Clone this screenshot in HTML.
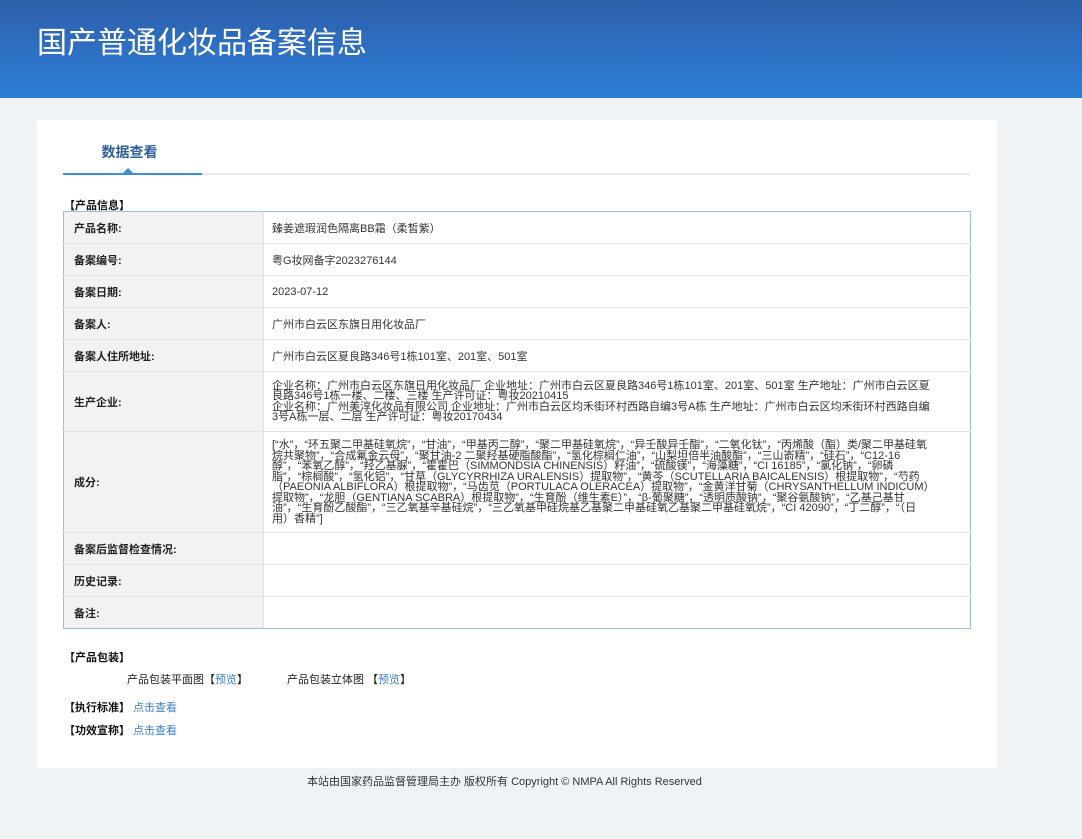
<!DOCTYPE html>
<html><head><meta charset="utf-8"><style>
*{margin:0;padding:0;box-sizing:border-box}
body{width:1082px;height:839px;background:#f0f3f6;font-family:"Liberation Sans","Noto Sans CJK SC",sans-serif;color:#333;position:relative;overflow:hidden}
.hd{position:absolute;left:0;top:0;width:1082px;height:98px;background:linear-gradient(180deg,#2c5faa 0%,#2e6fc2 50%,#2a7fd4 100%)}
.hd h1{position:absolute;left:37px;top:18px;font-size:30px;font-weight:normal;color:#fff;letter-spacing:0}
.card{position:absolute;left:37px;top:120px;width:960px;height:648px;background:#fff}
.tab{position:absolute;left:60px;top:142px;width:139px;text-align:center;font-size:14px;color:#2d5f9c;font-weight:bold}
.line{position:absolute;left:63px;top:173px;width:907px;height:2px;background:#e8e8e8}
.line2{position:absolute;left:63px;top:173px;width:139px;height:2px;background:#3b8fd8}
.tri{position:absolute;left:123px;top:168px;width:0;height:0;border-left:5px solid transparent;border-right:5px solid transparent;border-bottom:5px solid #3b8fd8}
.sec{position:absolute;font-size:11px;font-weight:bold;color:#111}
table{position:absolute;left:63px;top:211px;width:908px;border-collapse:collapse;border:1px solid #9dbde8;font-size:11px}
td{border:1px solid #e2e2e2;vertical-align:middle}
table tr:first-child td{border-top:1px solid #9dbde8}
table tr:last-child td{border-bottom:1px solid #9dbde8}
td.l{width:200px;background:#f2f2f2;font-weight:bold;padding-left:10px;color:#222;border-left:1px solid #9dbde8}
td.v{padding:0 40px 0 8px;color:#333;border-right:1px solid #9dbde8}
.s{line-height:10.5px;padding:6px 40px 6px 8px!important}
.f{position:absolute;font-size:11px;color:#222}
a{color:#3b7fd0;text-decoration:none}
.ft{position:absolute;left:307px;top:773px;font-size:11px;color:#333;white-space:nowrap}
</style></head><body>
<div class="hd"><h1>国产普通化妆品备案信息</h1></div>
<div class="card"></div>
<div class="tab">数据查看</div>
<div class="line"></div><div class="line2"></div><div class="tri"></div>
<div class="sec" style="left:64px;top:197px">【产品信息】</div>
<table>
<tr style="height:32px"><td class="l">产品名称:</td><td class="v">臻姜遮瑕润色隔离BB霜（柔皙紫）</td></tr>
<tr style="height:32px"><td class="l">备案编号:</td><td class="v">粤G妆网备字2023276144</td></tr>
<tr style="height:32px"><td class="l">备案日期:</td><td class="v">2023-07-12</td></tr>
<tr style="height:32px"><td class="l">备案人:</td><td class="v">广州市白云区东旗日用化妆品厂</td></tr>
<tr style="height:32px"><td class="l">备案人住所地址:</td><td class="v">广州市白云区夏良路346号1栋101室、201室、501室</td></tr>
<tr style="height:60px"><td class="l">生产企业:</td><td class="v s">企业名称：广州市白云区东旗日用化妆品厂 企业地址：广州市白云区夏良路346号1栋101室、201室、501室 生产地址：广州市白云区夏良路346号1栋一楼、二楼、三楼 生产许可证：粤妆20210415<br>企业名称：广州美淳化妆品有限公司 企业地址：广州市白云区均禾街环村西路自编3号A栋 生产地址：广州市白云区均禾街环村西路自编3号A栋一层、二层 生产许可证：粤妆20170434</td></tr>
<tr style="height:101px"><td class="l">成分:</td><td class="v s">[“水”，“环五聚二甲基硅氧烷”，“甘油”，“甲基丙二醇”，“聚二甲基硅氧烷”，“异壬酸异壬酯”，“二氧化钛”，“丙烯酸（酯）类/聚二甲基硅氧烷共聚物”，“合成氟金云母”，“聚甘油-2 二聚羟基硬脂酸酯”，“氢化棕榈仁油”，“山梨坦倍半油酸酯”，“三山嵛精”，“硅石”，“C12-16醇”，“苯氧乙醇”，“羟乙基脲”，“霍霍巴（SIMMONDSIA CHINENSIS）籽油”，“硫酸镁”，“海藻糖”，“CI 16185”，“氯化钠”，“卵磷脂”，“棕榈酸”，“氢化铝”，“甘草（GLYCYRRHIZA URALENSIS）提取物”，“黄芩（SCUTELLARIA BAICALENSIS）根提取物”，“芍药（PAEONIA ALBIFLORA）根提取物”，“马齿苋（PORTULACA OLERACEA）提取物”，“金黄洋甘菊（CHRYSANTHELLUM INDICUM）提取物”，“龙胆（GENTIANA SCABRA）根提取物”，“生育酚（维生素E）”，“β-葡聚糖”，“透明质酸钠”，“聚谷氨酸钠”，“乙基己基甘油”，“生育酚乙酸酯”，“三乙氧基辛基硅烷”，“三乙氧基甲硅烷基乙基聚二甲基硅氧乙基聚二甲基硅氧烷”，“CI 42090”，“丁二醇”，“（日用）香精”]</td></tr>
<tr style="height:32px"><td class="l">备案后监督检查情况:</td><td class="v"></td></tr>
<tr style="height:32px"><td class="l">历史记录:</td><td class="v"></td></tr>
<tr style="height:32px"><td class="l">备注:</td><td class="v"></td></tr>
</table>
<div class="sec" style="left:64px;top:649px">【产品包装】</div>
<div class="f" style="left:127px;top:671px">产品包装平面图【<a>预览</a>】</div>
<div class="f" style="left:287px;top:671px">产品包装立体图 【<a>预览</a>】</div>
<div class="sec" style="left:64px;top:699px">【执行标准】 <a style="font-weight:normal">点击查看</a></div>
<div class="sec" style="left:64px;top:722px">【功效宣称】 <a style="font-weight:normal">点击查看</a></div>
<div class="ft">本站由国家药品监督管理局主办 版权所有 Copyright © NMPA All Rights Reserved</div>
</body></html>
